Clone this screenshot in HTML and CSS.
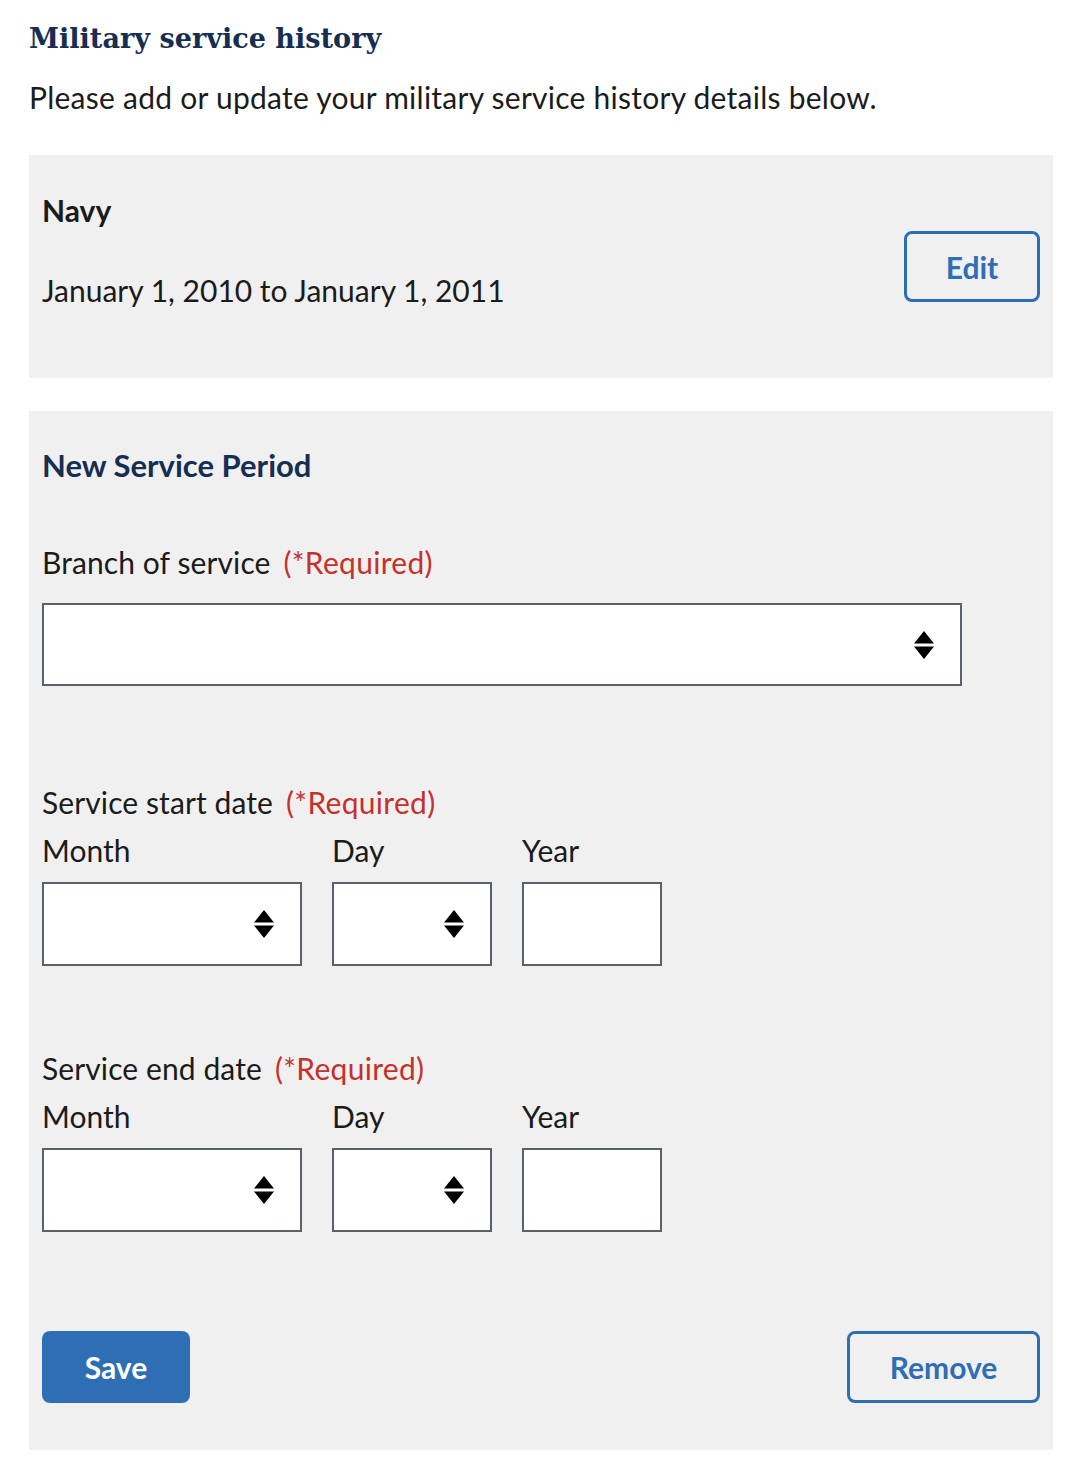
FILE: index.html
```html
<!DOCTYPE html>
<html lang="en">
<head>
<meta charset="utf-8">
<title>Military service history</title>
<link rel="stylesheet" href="styles.css">
</head>
<body>
<main class="page">
  <h1 class="title">Military service history</h1>
  <p class="intro">Please add or update your military service history details below.</p>

  <section class="card summary">
    <div class="summary-text">
      <p class="branch">Navy</p>
      <p class="dates">January 1, 2010 to January 1, 2011</p>
    </div>
    <button class="btn btn-outline btn-edit" type="button">Edit</button>
  </section>

  <section class="card period">
    <h2 class="period-title">New Service Period</h2>

    <div class="field">
      <label class="label">Branch of service<span class="req">(*Required)</span></label>
      <div class="select select-branch">
        <svg class="unfold" viewBox="0 0 20 28" aria-hidden="true"><polygon points="10,0 20,12.5 0,12.5"/><polygon points="0,15.5 20,15.5 10,28"/></svg>
      </div>
    </div>

    <fieldset class="date date-start">
      <legend class="label">Service start date<span class="req">(*Required)</span></legend>
      <div class="date-row">
        <div class="date-col">
          <span class="sub-label">Month</span>
          <div class="select select-month">
            <svg class="unfold" viewBox="0 0 20 28" aria-hidden="true"><polygon points="10,0 20,12.5 0,12.5"/><polygon points="0,15.5 20,15.5 10,28"/></svg>
          </div>
        </div>
        <div class="date-col">
          <span class="sub-label">Day</span>
          <div class="select select-day">
            <svg class="unfold" viewBox="0 0 20 28" aria-hidden="true"><polygon points="10,0 20,12.5 0,12.5"/><polygon points="0,15.5 20,15.5 10,28"/></svg>
          </div>
        </div>
        <div class="date-col">
          <span class="sub-label">Year</span>
          <div class="input input-year"></div>
        </div>
      </div>
    </fieldset>

    <fieldset class="date date-end">
      <legend class="label">Service end date<span class="req">(*Required)</span></legend>
      <div class="date-row">
        <div class="date-col">
          <span class="sub-label">Month</span>
          <div class="select select-month">
            <svg class="unfold" viewBox="0 0 20 28" aria-hidden="true"><polygon points="10,0 20,12.5 0,12.5"/><polygon points="0,15.5 20,15.5 10,28"/></svg>
          </div>
        </div>
        <div class="date-col">
          <span class="sub-label">Day</span>
          <div class="select select-day">
            <svg class="unfold" viewBox="0 0 20 28" aria-hidden="true"><polygon points="10,0 20,12.5 0,12.5"/><polygon points="0,15.5 20,15.5 10,28"/></svg>
          </div>
        </div>
        <div class="date-col">
          <span class="sub-label">Year</span>
          <div class="input input-year"></div>
        </div>
      </div>
    </fieldset>

    <div class="actions">
      <button class="btn btn-primary" type="button">Save</button>
      <button class="btn btn-outline btn-remove" type="button">Remove</button>
    </div>
  </section>
</main>
</body>
</html>
```

FILE: styles.css
```css
* { box-sizing: border-box; }

html, body {
  margin: 0;
  padding: 0;
  background: #ffffff;
}

body {
  font-family: "Lato", "Open Sans", sans-serif;
  color: #1b1b1b;
}

.page {
  width: 1024px;
  margin-left: 29px;
  padding-bottom: 22px;
}

.title {
  margin: 21px 0 0;
  font-family: "DejaVu Serif", "Liberation Serif", serif;
  font-weight: 700;
  font-size: 27.1px;
  line-height: 36px;
  color: #162e51;
}

.intro {
  margin: 22px 0 0;
  font-size: 30px;
  line-height: 36px;
  letter-spacing: 0.25px;
}

.card {
  background: #f0f0f0;
  padding: 0 13px;
}

.summary {
  margin-top: 40px;
  display: flex;
  align-items: center;
  justify-content: space-between;
}

.summary-text {
  padding: 37px 0 70px;
}

.branch {
  margin: 0;
  font-weight: 700;
  font-size: 30px;
  line-height: 36px;
}

.dates {
  margin: 44px 0 0;
  font-size: 30px;
  line-height: 36px;
}

.btn {
  font-family: "Lato", "Open Sans", sans-serif;
  font-weight: 700;
  font-size: 30px;
  border-radius: 8px;
  height: 72px;
  padding: 0;
  cursor: pointer;
}

.btn-outline {
  background: transparent;
  border: 3px solid #2e6eb4;
  color: #2e6eb4;
}

.btn-edit {
  width: 136px;
  height: 71px;
}

.btn-primary {
  background: #2e6eb4;
  border: 0;
  color: #ffffff;
  width: 148px;
}

.btn-remove {
  width: 193px;
}

.period {
  margin-top: 33px;
  padding-top: 35px;
  padding-bottom: 47px;
}

.period-title {
  margin: 0;
  font-weight: 700;
  font-size: 31px;
  line-height: 38px;
  color: #162e51;
}

.field {
  margin-top: 60px;
}

.label {
  display: block;
  font-size: 30px;
  line-height: 36px;
  padding: 0;
  letter-spacing: 0.1px;
}

.req {
  color: #c5312b;
  margin-left: 13px;
  letter-spacing: 0.3px;
}

.select,
.input {
  position: relative;
  background: #ffffff;
  border: 2px solid #5b616b;
  height: 84px;
}

.select-branch {
  margin-top: 23px;
  width: 920px;
  height: 83px;
}

.unfold {
  position: absolute;
  right: 26px;
  top: 50%;
  width: 20px;
  height: 28px;
  margin-top: -14px;
  fill: #000000;
}

.date {
  border: 0;
  margin: 0;
  padding: 0;
  min-width: 0;
}

.date-start {
  margin-top: 98px;
}

.date-end {
  margin-top: 84px;
}

.date .label {
  float: left;
  width: 100%;
}

.date-row {
  clear: both;
  display: flex;
  gap: 30px;
  padding-top: 12px;
}

.date-col {
  display: flex;
  flex-direction: column;
}

.sub-label {
  font-size: 30px;
  line-height: 36px;
  margin-bottom: 14px;
}

.select-month { width: 260px; }
.select-day { width: 160px; }
.input-year { width: 140px; }

.actions {
  margin-top: 99px;
  display: flex;
  justify-content: space-between;
}
```
